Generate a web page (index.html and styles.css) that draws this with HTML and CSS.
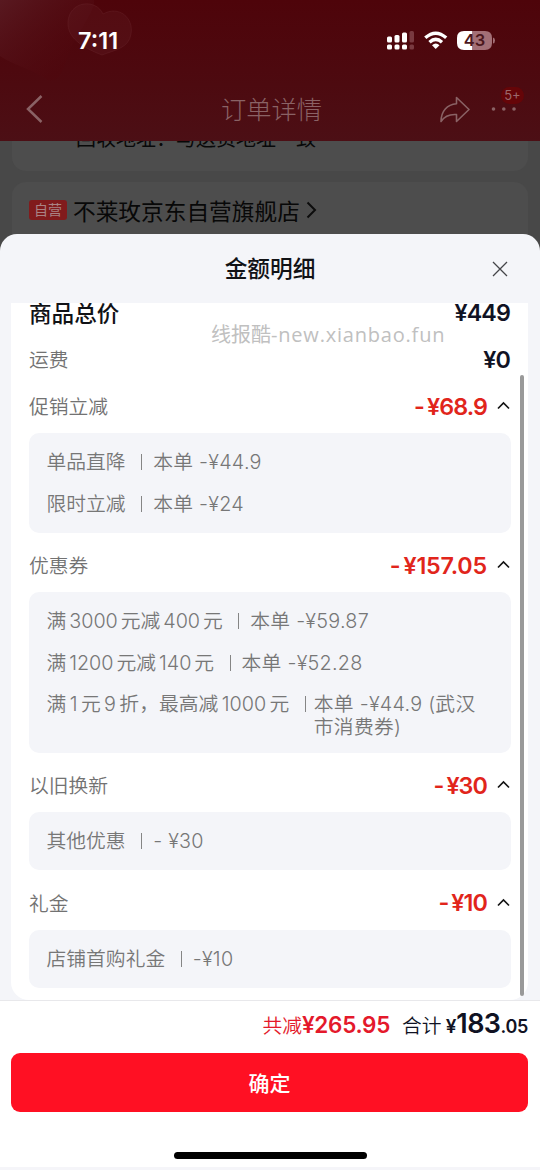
FILE: index.html
```html
<!DOCTYPE html>
<html lang="zh-CN">
<head>
<meta charset="utf-8">
<title>订单详情</title>
<link rel="stylesheet" href="styles.css">
</head>
<body>
<div class="screen">
  <header class="top">
    <svg class="hearts" width="140" height="90" viewBox="0 0 140 90">
      <defs><linearGradient id="petal" x1="0" y1="0" x2="1" y2="1"><stop offset="0" stop-color="#5c2028" stop-opacity=".75"/><stop offset=".75" stop-color="#50060c" stop-opacity=".3"/><stop offset="1" stop-color="#5a0308" stop-opacity=".4"/></linearGradient></defs>
      <path d="M0 0H94C96 8 82 26 70 50C63 69 60 83 48 80C32 69 13 65 0 56Z" fill="url(#petal)"/>
      <path d="M102 55C81 47 67 37 68 22C69 1 96-2 103 14C119 5 134 18 131 34C129 48 115 50 102 55Z" fill="#652028" fill-opacity=".28" stroke="#702e35" stroke-opacity=".3"/>
    </svg>
    <div class="status">
      <span class="time">7:11</span>
      <svg class="signals" width="110" height="24" viewBox="0 0 110 24">
        <g fill="#fff"><rect x="0" y="8.5" width="5" height="6" rx="1.5"/><rect x="7.5" y="7" width="5" height="7.5" rx="1.5"/><rect x="15" y="4.5" width="5" height="10" rx="1.5"/><rect x="0" y="16.5" width="5" height="5" rx="1.5"/><rect x="7.5" y="16.5" width="5" height="5" rx="1.5"/><rect x="15" y="16.5" width="5" height="5" rx="1.5"/></g>
        <g fill="#793a40"><rect x="22.5" y="3" width="4.5" height="11.5" rx="1.5"/><rect x="22.5" y="16.5" width="4.5" height="5" rx="1.5"/></g>
        <g fill="none" stroke="#fff" stroke-width="3.4"><path d="M38.3 9.8Q48.700 .5 59.200 9.800"/><path d="M42.500 14.200Q48.700 8.500 55 14.200"/></g>
        <path d="M45 17.200Q48.700 14 52.500 17.200L48.700 21Z" fill="#fff"/>
        <path d="M77 3H85.500V22H77Q70 22 70 15V10Q70 3 77 3Z" fill="#fff"/>
        <path d="M85.500 3H98Q105 3 105 10V15Q105 22 98 22H85.500Z" fill="#a36f76"/>
        <path d="M106 9.500Q108 10 108 12.500T106 15.500Z" fill="#a36f76"/>
        <text class="battery" x="87.500" y="18.300" text-anchor="middle">43</text>
      </svg>
    </div>
    <div class="nav">
      <svg width="18" height="30" viewBox="0 0 18 30" fill="none" stroke="#8a6265" stroke-width="2.500"><path d="M15.500 2L2 15L15.500 28"/></svg>
      <h1>订单详情</h1>
      <div class="actions">
        <svg width="30" height="27" viewBox="0 0 30 27" fill="none" stroke="#8a6265" stroke-width="1.600" stroke-linejoin="round"><path d="M16.500 1.500L29 13.500L16.500 25.500V18.500C9 18 4.500 20 1 25.500C1.200 15 7 8.500 16.500 7.800Z"/></svg>
        <span class="more"><svg width="26" height="6" viewBox="0 0 26 6" fill="#8a6265"><circle cx="2.500" cy="3" r="1.800"/><circle cx="12.800" cy="3" r="1.800"/><circle cx="23" cy="3" r="1.800"/></svg><b class="count">5+</b></span>
      </div>
    </div>
  </header>
  <main class="order">
    <section class="panel address"><p>回收地址：与送货地址一致</p></section>
    <section class="panel shop"><span class="tag">自营</span><span>不莱玫京东自营旗舰店</span><svg width="11" height="18" viewBox="0 0 11 18" fill="none" stroke="#0c0c0c" stroke-width="2"><path d="M1.500 1.500L9 9L1.500 16.500"/></svg></section>
  </main>

  <div class="sheet">
    <div class="sheet-head"><h2>金额明细</h2><svg class="close" width="16" height="16" viewBox="0 0 16 16" stroke="#444549" stroke-width="1.300"><path d="M1 1L15 15M15 1L1 15"/></svg></div>
    <div class="scroll">
      <div class="card">
        <div class="row total"><strong>商品总价</strong><b class="price">¥449</b></div>
        <div class="row"><span>运费</span><b class="price">¥0</b></div>
        <section>
          <div class="row"><span>促销立减</span><b class="price off"><i>-</i>¥68.9</b><svg class="fold" width="13" height="9" viewBox="0 0 13 9"><path d="M1 7.500L6.500 2L12 7.500"/></svg></div>
          <div class="details">
            <div class="item"><span class="name">单品直降</span><i class="bar"></i><span class="value">本单 -¥44.9</span></div>
            <div class="item"><span class="name">限时立减</span><i class="bar"></i><span class="value">本单 -¥24</span></div>
          </div>
        </section>
        <section>
          <div class="row"><span>优惠券</span><b class="price off wide"><i>-</i>¥157.05</b><svg class="fold" width="13" height="9" viewBox="0 0 13 9"><path d="M1 7.500L6.500 2L12 7.500"/></svg></div>
          <div class="details coupons">
            <div class="item"><span class="name">满<em>3000</em>元减<em>400</em>元</span><i class="bar"></i><span class="value">本单 -¥59.87</span></div>
            <div class="item"><span class="name">满<em>1200</em>元减<em>140</em>元</span><i class="bar"></i><span class="value">本单 -¥52.28</span></div>
            <div class="item long"><span class="name">满<em>1</em>元<em>9</em>折，最高减<em>1000</em>元</span><i class="bar"></i><span class="value">本单 -¥44.9 (武汉<br>市消费券)</span></div>
          </div>
        </section>
        <section>
          <div class="row"><span>以旧换新</span><b class="price off"><i>-</i>¥30</b><svg class="fold" width="13" height="9" viewBox="0 0 13 9"><path d="M1 7.500L6.500 2L12 7.500"/></svg></div>
          <div class="details"><div class="item"><span class="name">其他优惠</span><i class="bar"></i><span class="value">- ¥30</span></div></div>
        </section>
        <section>
          <div class="row"><span>礼金</span><b class="price off"><i>-</i>¥10</b><svg class="fold" width="13" height="9" viewBox="0 0 13 9"><path d="M1 7.500L6.500 2L12 7.500"/></svg></div>
          <div class="details"><div class="item"><span class="name">店铺首购礼金</span><i class="bar"></i><span class="value">-¥10</span></div></div>
        </section>
      </div>
      <span class="thumb"></span>
      <span class="watermark">线报酷<span>-new.xianbao.fun</span></span>
    </div>
    <footer>
      <div class="sum"><span class="saved">共减<b>¥265.95</b></span><span class="pay">合计<b class="yen">¥</b><b class="big">183</b><b class="cents">.05</b></span></div>
      <button class="confirm">确定</button>
      <div class="home"></div>
    </footer>
  </div>
</div>
</body>
</html>
```
FILE: styles.css
```css
* { box-sizing: border-box; }
body { margin: 0; font-family: Inter, "Noto Sans CJK SC", sans-serif; }
h1, h2, p { margin: 0; }
i, em { font-style: normal; }
svg { display: block; flex: none; }
.screen { position: relative; width: 540px; height: 1170px; overflow: hidden; background: #484848; }
.top { position: relative; height: 141px; background: linear-gradient(#4e040a, #4d0a10 60%, #4c0f15); }
.hearts { position: absolute; left: 0; top: 0; }
.status { position: relative; height: 79px; padding: 28px 43px 0 78px; display: flex; justify-content: space-between; }
.time { color: #fff; font-size: 23.500px; font-weight: 600; line-height: 25px; }
.battery { font: 600 16.500px Inter, sans-serif; fill: #4b171d; }
.nav { position: relative; height: 60px; padding: 0 23px 0 26px; display: flex; align-items: center; justify-content: space-between; color: #8a6265; }
.nav h1 { font-size: 25.300px; line-height: 36px; font-weight: 300; margin: 2px 0 0 59px; }
.actions { display: flex; align-items: center; gap: 21px; }
.more { position: relative; }
.count { position: absolute; left: 10px; top: -19px; width: 23px; height: 17px; border-radius: 9px; background: #650508; font-size: 13px; line-height: 17px; text-align: center; font-weight: 400; color: #9b696c; }
.order { padding: 0 12px; }
.panel { background: #4d4d4d; color: #080808; }
.address { height: 30px; border-radius: 0 0 14px 14px; overflow: hidden; }
.address p { margin: -17px 0 0 64px; font-size: 20px; line-height: 30px; white-space: nowrap; }
.shop { height: 80px; margin-top: 11px; border-radius: 14px; padding: 15px 17px; display: flex; align-items: flex-start; gap: 6px; font-size: 22.700px; line-height: 30px; }
.shop svg { margin-top: 4px; }
.tag { width: 38px; height: 20px; margin-top: 3px; border-radius: 3px; background: #811b1c; color: #a98384; font-size: 14px; line-height: 20px; text-align: center; }
.sheet { position: absolute; left: 0; top: 234px; width: 540px; height: 936px; border-radius: 17px 17px 0 0; overflow: hidden; background: #f4f5f9; display: flex; flex-direction: column; }
.sheet-head { flex: none; height: 69px; display: grid; grid-template-columns: 1fr auto 1fr; align-items: center; padding: 0 32px; }
.sheet-head h2 { grid-column: 2; margin-top: 1px; font-size: 22.700px; line-height: 30px; font-weight: 500; color: #111216; }
.close { justify-self: end; }
.scroll { position: relative; flex: none; height: 697px; padding: 0 12px 0 11px; overflow: hidden; }
.card { height: 697px; padding: 0 17px 0 18px; background: #fff; border-radius: 0 0 18px 18px; overflow: hidden; }
.row { height: 47px; display: flex; align-items: center; font-size: 19.800px; font-weight: 350; color: #727272; }
.row > span { margin-top: -2px; }
.total { margin-top: -14px; }
.total strong { margin-top: -1px; font-size: 22.600px; font-weight: 500; color: #111216; }
.price { margin: -1px 1px 0 auto; font-size: 23.300px; font-weight: 600; color: #101223; letter-spacing: -.9px; }
.off { margin-right: 2px; color: #e1251b; }
.wide { letter-spacing: -.2px; }
.off i { margin-right: 3px; }
.fold { margin: -2px 1px 0 8px; fill: none; stroke: #151515; stroke-width: 1.700; }
.details { margin: 3px 0 9.500px; padding: 18px 17px 17.500px 17.500px; border-radius: 10px; background: #f4f5f9; display: flex; flex-direction: column; gap: 19px; font-size: 19.800px; font-weight: 350; line-height: 22.500px; color: #777; }
.coupons { padding-bottom: 14.500px; }
.item { display: flex; white-space: nowrap; }
.bar { flex: none; width: 1px; height: 16px; margin: 3px 11px 0 15.500px; background: #858585; }
.value { letter-spacing: .25px; }
.long .bar { margin-right: 8px; }
.name em { margin: 0 2.900px; }
.long em { margin: 0 3.400px; }
.thumb { position: absolute; left: 520px; top: 72px; width: 4px; height: 621px; border-radius: 2px; background: #999; }
.watermark { position: absolute; left: 211px; top: 18px; font-family: "Open Sans", "Noto Sans CJK SC", sans-serif; font-size: 20px; line-height: 28px; color: #c0c0c0; white-space: nowrap; }
.watermark span { letter-spacing: .8px; }
footer { height: 170px; padding: 0 12px 0 11px; background: #fff; border-top: 1px solid #e8e8eb; border-bottom: 3px solid #f5f5f9; }
.sum { height: 52px; display: flex; align-items: baseline; justify-content: flex-end; gap: 12px; font-size: 19.800px; font-weight: 350; line-height: 45px; white-space: nowrap; color: #101223; }
.saved { color: #e4192b; }
.saved b { font-size: 22.500px; font-weight: 600; letter-spacing: -.3px; }
.yen { margin-left: 4px; font-size: 19px; font-weight: 600; }
.big { font-size: 27px; font-weight: 600; letter-spacing: -.6px; }
.cents { font-size: 18px; font-weight: 600; letter-spacing: -.3px; }
.confirm { display: block; width: 100%; height: 59px; padding: 0 0 2px; border: 0; border-radius: 9px; background: #ff1023; color: #fff; font: 500 21px "Noto Sans CJK SC", sans-serif; }
.home { width: 193px; height: 7px; margin: 40px 0 0 163px; border-radius: 4px; background: #000; }
```
